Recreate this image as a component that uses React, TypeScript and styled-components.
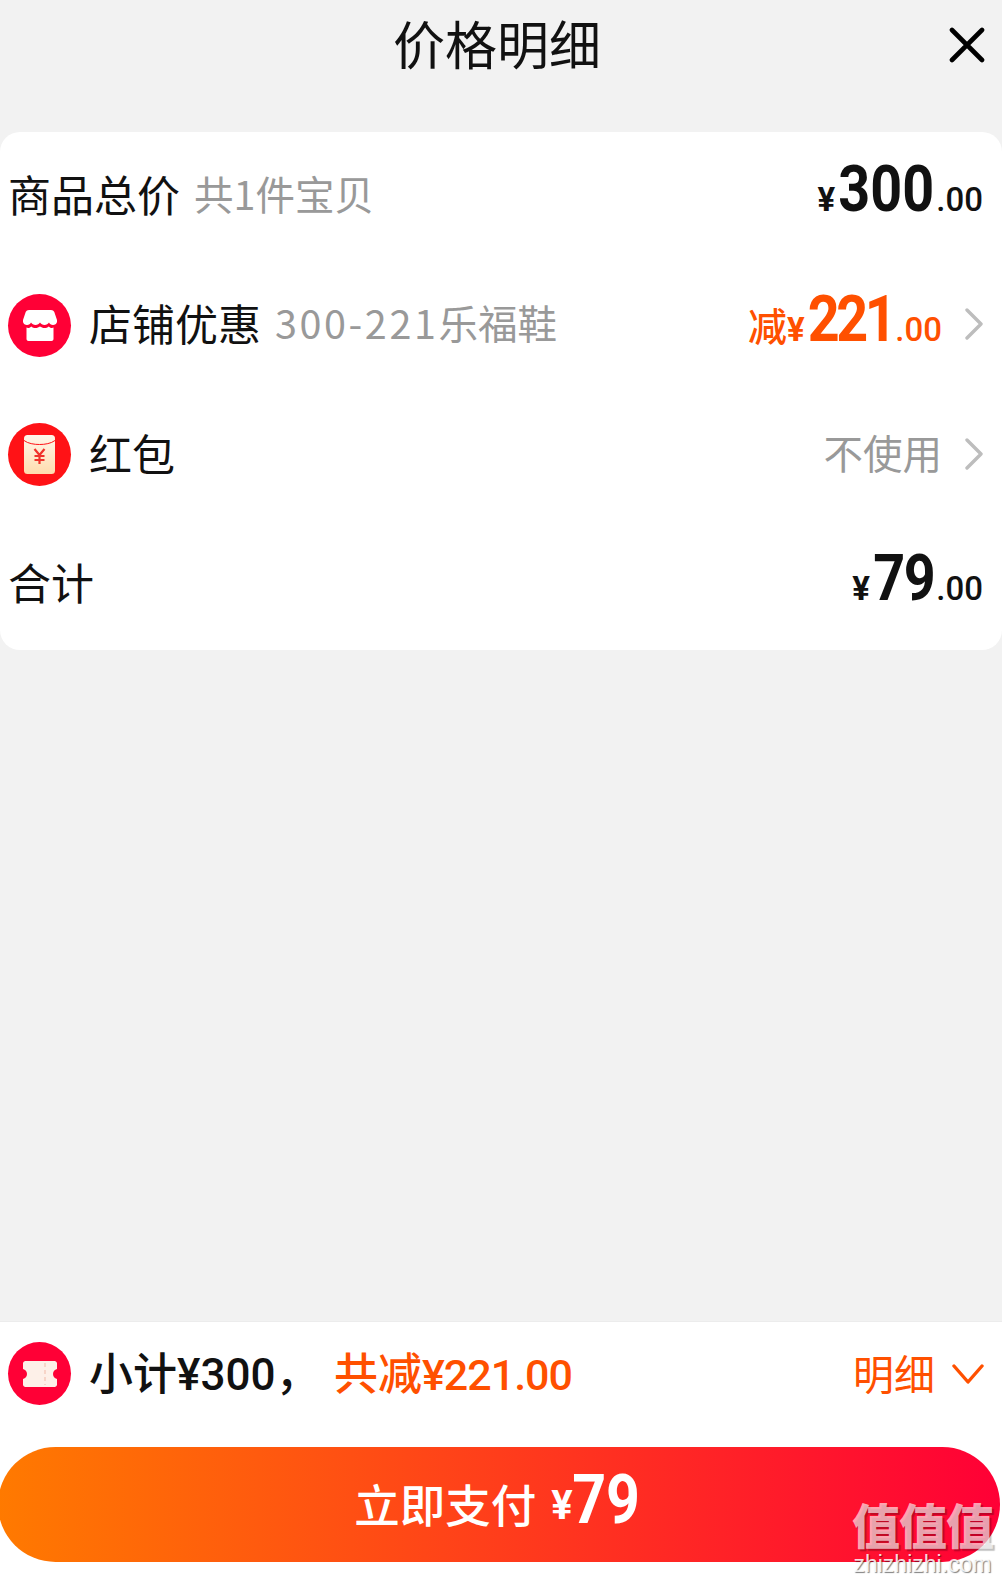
import React from 'react';
import styled, { createGlobalStyle } from 'styled-components';

const CJK = `"Noto Sans CJK SC", "Liberation Sans", sans-serif`;
const NUM = `"Roboto", "Liberation Sans", sans-serif`;
const ORANGE = '#ff5000';
const INK = '#111111';

// Roboto digits are wider than the price face in the shot, so they get squeezed
const SQUEEZE = 0.87;
const DIGIT_EM = 0.5615;

const GlobalStyle = createGlobalStyle`
  html, body {
    margin: 0;
    padding: 0;
    background: #ffffff;
  }
  * {
    box-sizing: border-box;
  }
`;

interface PriceProps {
  prefix?: string;
  whole: string;
  tight?: number;
  color?: string;
}

const Price: React.FC<PriceProps> = ({ prefix, whole, tight = 0, color = INK }) => (
  <PriceBox $color={color}>
    {prefix && <PricePrefix>{prefix}</PricePrefix>}
    <Yen>¥</Yen>
    <Whole $chars={whole.length} $tight={tight}>
      {whole}
    </Whole>
    <Cents>.00</Cents>
  </PriceBox>
);

const Chevron = () => (
  <ChevronIcon width="19" height="32" viewBox="0 0 19 32" fill="none">
    <path d="M2 2l14 14L2 30" stroke="#bdbdbd" strokeWidth="3.4" strokeLinecap="round" strokeLinejoin="round" />
  </ChevronIcon>
);

const ShopIcon = () => (
  <IconCircle $bg="#ff0036">
    <svg width="34" height="32" viewBox="0 0 34 32">
      <path d="M6 1h22c1.500 0 2.700.8 3.300 2L34 11c.6 3-1.500 5-4 5-2 0-3.400-1-4-2.500-1 1.500-2.500 2.500-4.500 2.500s-3.500-1-4.500-2.500c-1 1.500-2.500 2.500-4.500 2.500S9 15 8 13.500C7.400 15 6 16 4 16c-2.500 0-4.600-2-4-5l2.700-8C3.300 1.800 4.500 1 6 1z" fill="#fff" />
      <path d="M3.500 18.500c.5.300 1 .5 1.500.5 1.500 0 2.500-.6 3.300-1.500 1.200 1 2.800 1.500 4.200 1.500 1.700 0 3.200-.6 4.500-1.500 1.300.9 2.800 1.500 4.500 1.500 1.400 0 3-.5 4.200-1.500.8.900 1.800 1.500 3.300 1.500.5 0 1-.2 1.500-.5V30c0 1.100-.9 2-2 2h-23c-1.100 0-2-.9-2-2V18.500z" fill="#fff" />
    </svg>
  </IconCircle>
);

const RedPacketIcon = () => (
  <IconCircle $bg="#ff1216">
    <svg width="31" height="39" viewBox="0 0 31 39">
      <defs>
        <linearGradient id="packet" x1="0" y1="0" x2="0" y2="1">
          <stop offset="0" stopColor="#fff6ea" />
          <stop offset="1" stopColor="#ffdcae" />
        </linearGradient>
      </defs>
      <rect width="31" height="39" rx="3.500" fill="url(#packet)" />
      <path d="M0 5.500c4 3 10 4 15.500 4S27 8.500 31 5.500" fill="none" stroke="#ff1216" strokeWidth="1" />
      <path d="M10.500 14l5 6 5-6M15.500 20v9M10.500 21h10M10.500 25h10" fill="none" stroke="#f0322a" strokeWidth="2.200" />
    </svg>
  </IconCircle>
);

const TicketIcon = () => (
  <IconCircle $bg="#ff0036">
    <svg width="34" height="26" viewBox="0 0 34 26">
      <path d="M2.500 0h29C32.900 0 34 1.100 34 2.500V8c-2.400.6-4 2.700-4 5s1.600 4.400 4 5v5.500c0 1.400-1.100 2.500-2.500 2.500h-29C1.100 26 0 24.900 0 23.500V18c2.400-.6 4-2.700 4-5S2.400 8.600 0 8V2.500C0 1.100 1.100 0 2.500 0z" fill="#fdf0e8" />
      <path d="M22 2v22" stroke="#f7d5c8" strokeWidth="2" strokeDasharray="4 3" />
    </svg>
  </IconCircle>
);

export default function App() {
  return (
    <Page>
      <GlobalStyle />
      <Header>
        <span />
        <Title>价格明细</Title>
        <CloseIcon width="36" height="36" viewBox="0 0 36 36">
          <path d="M3 3l30 30M33 3L3 33" stroke="#000" strokeWidth="4.600" strokeLinecap="round" />
        </CloseIcon>
      </Header>

      <Card>
        <Row>
          <RowLabel>
            <Name>商品总价</Name>
            <Note>共1件宝贝</Note>
          </RowLabel>
          <RowValue>
            <Price whole="300" />
          </RowValue>
        </Row>
        <Row>
          <RowLabel>
            <ShopIcon />
            <Name>店铺优惠</Name>
            <Note>
              <NoteDigits>300-221</NoteDigits>乐福鞋
            </Note>
          </RowLabel>
          <RowValue>
            <Price prefix="减" whole="221" tight={4} color={ORANGE} />
            <Chevron />
          </RowValue>
        </Row>
        <Row>
          <RowLabel>
            <RedPacketIcon />
            <Name>红包</Name>
          </RowLabel>
          <RowValue>
            <Unused>不使用</Unused>
            <Chevron />
          </RowValue>
        </Row>
        <Row>
          <RowLabel>
            <Name>合计</Name>
          </RowLabel>
          <RowValue>
            <Price whole="79" tight={1.5} />
          </RowValue>
        </Row>
      </Card>

      <Spacer />

      <Footer>
        <Summary>
          <SummaryLeft>
            <TicketIcon />
            <SummaryText>
              小计<SummaryNum>¥300</SummaryNum>，
            </SummaryText>
            <SummaryOff>
              共减<SummaryOffNum>¥221.00</SummaryOffNum>
            </SummaryOff>
          </SummaryLeft>
          <DetailToggle>
            <DetailLabel>明细</DetailLabel>
            <svg width="32" height="21" viewBox="0 0 32 21" fill="none">
              <path d="M2 2l14 16L30 2" stroke={ORANGE} strokeWidth="3.4" strokeLinecap="round" strokeLinejoin="round" />
            </svg>
          </DetailToggle>
        </Summary>
        <PayButton>
          立即支付
          <PayYen>¥</PayYen>
          <PayAmount>79</PayAmount>
        </PayButton>
      </Footer>

      <Watermark>
        <WatermarkMark>值值值</WatermarkMark>
        <WatermarkSite>zhizhizhi.com</WatermarkSite>
      </Watermark>
    </Page>
  );
}

const Page = styled.div`
  position: relative;
  display: flex;
  flex-direction: column;
  width: 1002px;
  height: 1584px;
  overflow: hidden;
  background: #f2f2f2;
  font-family: ${CJK};
  color: ${INK};
`;

const Header = styled.header`
  display: grid;
  grid-template-columns: 1fr auto 1fr;
  align-items: center;
  height: 132px;
  padding: 0 17px 42px 9px;
`;

const Title = styled.h1`
  margin: 0 0 4px;
  font-size: 52px;
  font-weight: 400;
  line-height: 86px;
`;

const CloseIcon = styled.svg`
  justify-self: end;
`;

const Card = styled.section`
  display: flex;
  flex-direction: column;
  background: #ffffff;
  border-radius: 20px;
`;

const Row = styled.div`
  display: flex;
  align-items: center;
  justify-content: space-between;
  height: 129.5px;
  padding: 0 19px 0 8px;
`;

const RowLabel = styled.div`
  display: flex;
  align-items: center;
`;

const IconCircle = styled.span<{ $bg: string }>`
  display: flex;
  align-items: center;
  justify-content: center;
  flex-shrink: 0;
  width: 63px;
  height: 63px;
  margin: 0 18px 2px 0;
  border-radius: 50%;
  background: ${(p) => p.$bg};
`;

const Name = styled.span`
  margin-bottom: 8px;
  font-size: 43px;
  line-height: 50px;
`;

const Note = styled.span`
  margin: 0 0 8px 14px;
  font-size: 39.5px;
  line-height: 50px;
  color: #999999;
`;

const NoteDigits = styled.span`
  letter-spacing: 2.6px;
`;

const RowValue = styled.div`
  display: flex;
  align-items: center;
  gap: 23px;
`;

const ChevronIcon = styled.svg`
  margin: 0 -1px 4px 0;
`;

const PriceBox = styled.span<{ $color: string }>`
  display: inline-flex;
  align-items: baseline;
  margin-bottom: 13px;
  color: ${(p) => p.$color};
`;

const PricePrefix = styled.span`
  font-size: 39px;
  font-weight: 500;
`;

const Yen = styled.span`
  margin-right: 3px;
  font-family: ${NUM};
  font-size: 33px;
  font-weight: 700;
`;

const Whole = styled.span<{ $chars: number; $tight: number }>`
  display: inline-block;
  margin-left: calc(
    ${(p) => -((1 - SQUEEZE) * DIGIT_EM * p.$chars).toFixed(3)}em + ${(p) => ((1 - SQUEEZE) * p.$tight * p.$chars).toFixed(2)}px
  );
  font-family: ${NUM};
  font-size: 64px;
  font-weight: 700;
  line-height: 70px;
  letter-spacing: ${(p) => -p.$tight}px;
  transform: scaleX(${SQUEEZE});
  transform-origin: right center;
`;

const Cents = styled.span`
  margin-left: 2px;
  font-family: ${NUM};
  font-size: 33px;
  font-weight: 500;
`;

const Unused = styled.span`
  margin-bottom: 8px;
  font-size: 39.5px;
  color: #999999;
`;

const Spacer = styled.div`
  flex: 1;
`;

const Footer = styled.footer`
  display: flex;
  flex-direction: column;
  height: 263px;
  background: #ffffff;
  border-top: 1px solid #ececec;
`;

const Summary = styled.div`
  display: flex;
  align-items: center;
  justify-content: space-between;
  height: 105px;
  margin-bottom: 20px;
  padding: 0 18px 0 8px;
`;

const SummaryLeft = styled.div`
  display: flex;
  align-items: center;
`;

const SummaryText = styled.span`
  width: 245px;
  margin-bottom: 8px;
  font-size: 44px;
  font-weight: 500;
`;

const SummaryOff = styled.span`
  margin-bottom: 8px;
  font-size: 44px;
  font-weight: 500;
  color: ${ORANGE};
`;

const SummaryNum = styled.span`
  font-family: ${NUM};
  font-size: 44px;
  font-weight: 500;
`;

const SummaryOffNum = styled(SummaryNum)`
  font-size: 43px;
  letter-spacing: -1px;
`;

const DetailToggle = styled.div`
  display: flex;
  align-items: center;
  gap: 17px;
  color: ${ORANGE};
`;

const DetailLabel = styled.span`
  margin-bottom: 6px;
  font-size: 41px;
`;

const PayButton = styled.div`
  display: flex;
  align-items: center;
  justify-content: center;
  width: 1002px;
  height: 115px;
  margin-left: -2px;
  padding-bottom: 4px;
  border-radius: 58px;
  background: linear-gradient(90deg, #ff7a00 0%, #ff0036 100%);
  font-size: 45.5px;
  font-weight: 500;
  color: #ffffff;
`;

const PayYen = styled.span`
  margin: 6px 2px 0 15px;
  font-family: ${NUM};
  font-size: 40px;
  font-weight: 700;
`;

const PayAmount = styled.span`
  display: inline-block;
  margin: -5px 4px 0 -13px;
  font-family: ${NUM};
  font-size: 68px;
  font-weight: 700;
  transform: scaleX(${SQUEEZE});
  transform-origin: right center;
`;

const Watermark = styled.div`
  position: absolute;
  right: 9px;
  bottom: 10px;
  display: flex;
  flex-direction: column;
  align-items: center;
`;

const WatermarkMark = styled.span`
  font-size: 48px;
  font-weight: 900;
  line-height: 52px;
  letter-spacing: -1px;
  color: rgba(255, 255, 255, 0.65);
  text-shadow: 2px 2px 1px rgba(0, 0, 0, 0.25);
`;

const WatermarkSite = styled.span`
  margin-top: 5px;
  font-family: "Liberation Sans", sans-serif;
  font-size: 23px;
  line-height: 20px;
  color: rgba(255, 255, 255, 0.85);
  text-shadow: 1px 1px 1px rgba(0, 0, 0, 0.5);
`;
